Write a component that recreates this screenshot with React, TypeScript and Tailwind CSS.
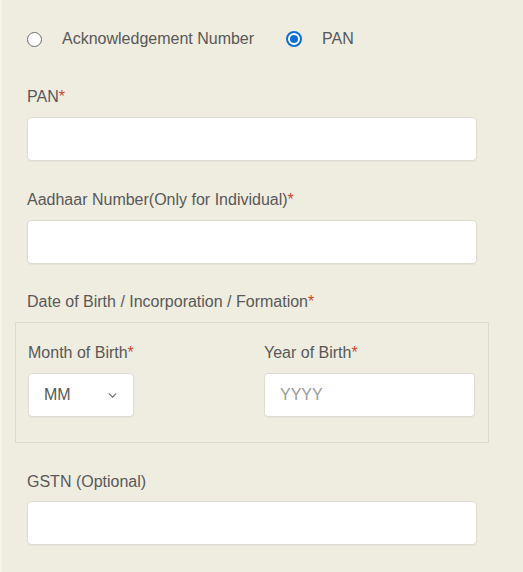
import { ChevronDown } from "lucide-react";

function Req() {
    return <span className="text-[#d0442a]">*</span>;
}

function Radio({ checked, label }: { checked?: boolean; label: string }) {
    return (
        <label className="flex items-center">
            {checked ? (
                <span className="w-[16px] h-[16px] rounded-full border-2 border-[#0a6fd6] bg-white flex items-center justify-center">
                    <span className="w-[8px] h-[8px] rounded-full bg-[#0a6fd6]" />
                </span>
            ) : (
                <span className="w-[15px] h-[15px] rounded-full border border-[#6b6b6b] bg-white" />
            )}
            <span className="ml-[20px]">{label}</span>
        </label>
    );
}

const inputCls = "block h-[44px] bg-white rounded-[4px] border border-[#dedcd2] shadow-[0_1px_1px_rgba(0,0,0,0.04)]";

export default function App() {
    return (
        <div
            className="w-[523px] h-[572px] bg-[#efede0] border-l-2 border-[#f6f5ec] text-[16px] leading-[24px] text-[#585858] overflow-hidden"
            style={{ fontFamily: '"Liberation Sans", Arial, sans-serif' }}
        >
            {/* Search type */}
            <div className="flex items-center gap-[32px] pl-[25px] pt-[27px]">
                <Radio label="Acknowledgement Number" />
                <Radio checked label="PAN" />
            </div>

            <div className="pl-[25px] w-[475px]">
                <div className="mt-[34px] -mb-[1px]">PAN<Req /></div>
                <div className={`${inputCls} mt-[9px] w-[450px]`} />

                <div className="mt-[27px] -mb-[1px]">Aadhaar Number(Only for Individual)<Req /></div>
                <div className={`${inputCls} mt-[9px] w-[450px]`} />

                <div className="mt-[26px] -mb-[1px]">Date of Birth / Incorporation / Formation<Req /></div>
            </div>

            {/* DOB box */}
            <div className="ml-[13px] mt-[9px] w-[474px] h-[121px] border border-[#dcdacb] pt-[18px] pl-[12px] flex">
                <div className="w-[236px]">
                    <div className="-mb-[1px]">Month of Birth<Req /></div>
                    <div className={`${inputCls} mt-[9px] w-[106px] flex items-center justify-between pl-[15px] pr-[14px]`}>
                        <span>MM</span>
                        <ChevronDown size={13} strokeWidth={2} className="text-[#666]" />
                    </div>
                </div>
                <div>
                    <div className="-mb-[1px]">Year of Birth<Req /></div>
                    <div className={`${inputCls} mt-[9px] w-[211px] flex items-center pl-[15px] text-[#9a9a9a]`}>
                        YYYY
                    </div>
                </div>
            </div>

            <div className="pl-[25px]">
                <div className="mt-[27px] -mb-[1px]">GSTN (Optional)</div>
                <div className={`${inputCls} mt-[8px] w-[450px]`} />
            </div>
        </div>
    );
}
